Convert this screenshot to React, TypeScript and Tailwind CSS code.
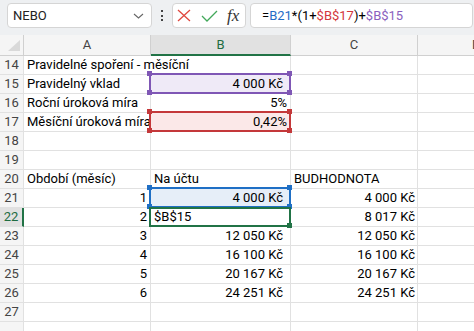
import React from "react";

type Tone = "purple" | "red" | "blue";

const TONE: Record<Tone, { border: string; fill: string; bg: string }> = {
  purple: { border: "border-[#7f57b5]", fill: "bg-[#7f57b5]", bg: "bg-[#efeaf7]" },
  red: { border: "border-[#c4383a]", fill: "bg-[#c4383a]", bg: "bg-[#fbe8e8]" },
  blue: { border: "border-[#1f6fc5]", fill: "bg-[#1f6fc5]", bg: "bg-[#e6eef8]" },
};

type Row = {
  n: number;
  label?: boolean;
  a?: string;
  aRight?: boolean;
  b?: string;
  bLeft?: boolean;
  bPad?: "wide" | "narrow";
  c?: string;
  tone?: Tone;
  active?: boolean;
};

const rows: Row[] = [
  { n: 14, a: "Pravidelné spoření - měsíční" },
  { n: 15, a: "Pravidelný vklad", b: "4 000 Kč", bPad: "wide", tone: "purple" },
  { n: 16, a: "Roční úroková míra", b: "5%", bPad: "narrow" },
  { n: 17, a: "Měsíční úroková míra", b: "0,42%", bPad: "narrow", tone: "red" },
  { n: 18 },
  { n: 19 },
  { n: 20, a: "Období (měsíc)", b: "Na účtu", bLeft: true, c: "BUDHODNOTA" },
  { n: 21, a: "1", aRight: true, b: "4 000 Kč", bPad: "wide", c: "4 000 Kč", tone: "blue" },
  { n: 22, a: "2", aRight: true, b: "$B$15", bLeft: true, c: "8 017 Kč", active: true },
  { n: 23, a: "3", aRight: true, b: "12 050 Kč", bPad: "wide", c: "12 050 Kč" },
  { n: 24, a: "4", aRight: true, b: "16 100 Kč", bPad: "wide", c: "16 100 Kč" },
  { n: 25, a: "5", aRight: true, b: "20 167 Kč", bPad: "wide", c: "20 167 Kč" },
  { n: 26, a: "6", aRight: true, b: "24 251 Kč", bPad: "wide", c: "24 251 Kč" },
  { n: 27 },
  { n: 28, label: false },
];

function RangeBox({ tone }: { tone: Tone }) {
  const t = TONE[tone];
  return (
    <div className={`pointer-events-none absolute -left-[2px] -top-[2px] -right-[1px] -bottom-[1px] z-10 border-2 ${t.border}`}>
      <span className={`absolute -left-[4px] -top-[4px] h-[5px] w-[5px] ${t.fill}`} />
      <span className={`absolute -right-[3px] -top-[4px] h-[5px] w-[5px] ${t.fill}`} />
      <span className={`absolute -left-[4px] -bottom-[3px] h-[5px] w-[5px] ${t.fill}`} />
      <span className={`absolute -right-[3px] -bottom-[3px] h-[5px] w-[5px] ${t.fill}`} />
    </div>
  );
}

function ActiveBox() {
  return (
    <div className="pointer-events-none absolute -left-[2px] -top-[1px] -right-[1px] -bottom-[1px] z-20 border-2 border-[#217346]">
      <span className="absolute -right-[3px] -bottom-[3px] h-[5px] w-[5px] bg-[#217346]" />
    </div>
  );
}

function SheetRow({ row }: { row: Row }) {
  const cell = "h-[19px] border-b border-r border-[#e1e1e1] leading-[18px] whitespace-nowrap";
  const spill = row.n === 14;
  return (
    <div className="grid grid-cols-[24px_127px_140px_127px_116px]">
      <div
        className={`h-[19px] border-b border-[#e1e1e1] text-center leading-[18px] ${
          row.active
            ? "border-r-2 border-r-[#217346] bg-[#e1e1e1] text-[#1e6c41]"
            : "border-r bg-[#f5f5f5] text-[#444]"
        }`}
      >
        {row.label === false ? null : row.n}
      </div>
      <div
        className={`${cell} px-[3px] ${spill ? "overflow-visible border-r-transparent" : "overflow-hidden"} ${
          row.aRight ? "text-right" : "text-left"
        }`}
      >
        {row.a}
      </div>
      <div
        className={`${cell} ${row.tone || row.active ? "relative" : ""} ${row.tone ? TONE[row.tone].bg : ""} ${
          row.bLeft ? "pl-[3px] text-left" : row.bPad === "narrow" ? "pr-[3px] text-right" : "pr-[7px] text-right"
        }`}
      >
        {row.b}
        {row.tone && <RangeBox tone={row.tone} />}
        {row.active && <ActiveBox />}
      </div>
      <div className={`${cell} ${row.n === 20 ? "pl-[3px] text-left" : "pr-[2px] text-right"}`}>{row.c}</div>
      <div className={cell} />
    </div>
  );
}

export default function App() {
  return (
    <div className="h-[331px] w-[474px] overflow-hidden bg-white font-[Roboto,sans-serif] text-[13px] text-black">
      {/* Name box + formula bar */}
      <div className="flex h-[35px] items-start bg-[#eef0f2] pt-[3px]">
        <div className="ml-[7px] flex h-[25px] w-[145px] items-center justify-between rounded-[4px] border border-[#d5d5d5] bg-white pl-[5px] pr-[7px]">
          <span className="text-[13px] text-[#222]">NEBO</span>
          <svg width="11" height="6" viewBox="0 0 11 6" fill="none">
            <path d="M1 1l4.5 4 4.5-4" stroke="#666" strokeWidth="1.1" />
          </svg>
        </div>
        <div className="flex h-[25px] w-[20px] flex-col items-center justify-center gap-[2.5px]">
          <span className="h-[2px] w-[2px] bg-[#444]" />
          <span className="h-[2px] w-[2px] bg-[#444]" />
          <span className="h-[2px] w-[2px] bg-[#444]" />
        </div>
        <div className="flex h-[25px] w-[74px] items-center rounded-[4px] border border-[#d5d5d5] bg-white pl-[4px]">
          <svg width="14" height="13" viewBox="0 0 14 13" fill="none">
            <path d="M1 1l12 11M13 1L1 12" stroke="#e0473e" strokeWidth="1.3" />
          </svg>
          <svg className="ml-[10px]" width="17" height="12" viewBox="0 0 17 12" fill="none">
            <path d="M1 6l5 5 10-10" stroke="#42a85a" strokeWidth="1.3" />
          </svg>
          <span className="ml-[9px] font-['Liberation_Serif',serif] text-[17px] italic leading-none text-[#333]">fx</span>
        </div>
        <div className="ml-[4px] flex h-[25px] w-[223px] items-center rounded-[4px] border border-[#d5d5d5] bg-white pl-[11px]">
          <span>=</span>
          <span className="text-[#1f6dc6]">B21</span>
          <span>*(1+</span>
          <span className="text-[#d3373c]">$B$17</span>
          <span>)+</span>
          <span className="text-[#8a5fbe]">$B$15</span>
        </div>
      </div>

      {/* Column headers */}
      <div className="grid h-[21px] grid-cols-[24px_127px_140px_127px_116px] bg-[#f5f5f5] text-[#444]">
        <div className="relative border-b border-r border-[#d0d0d0]">
          <svg className="absolute left-[8px] top-[5px]" width="12" height="11" viewBox="0 0 12 11">
            <polygon points="12,0 12,11 0,11" fill="#d9d9d9" />
          </svg>
        </div>
        <div className="border-b border-r border-[#d0d0d0] text-center leading-[20px]">A</div>
        <div className="border-b-2 border-r border-[#d0d0d0] border-b-[#217346] bg-[#e1e1e1] text-center leading-[19px] text-[#1e6c41]">
          B
        </div>
        <div className="border-b border-r border-[#d0d0d0] text-center leading-[20px]">C</div>
        <div className="overflow-hidden border-b border-[#d0d0d0] pl-[54px] leading-[20px]">D</div>
      </div>

      {rows.map((row) => (
        <SheetRow key={row.n} row={row} />
      ))}
    </div>
  );
}
